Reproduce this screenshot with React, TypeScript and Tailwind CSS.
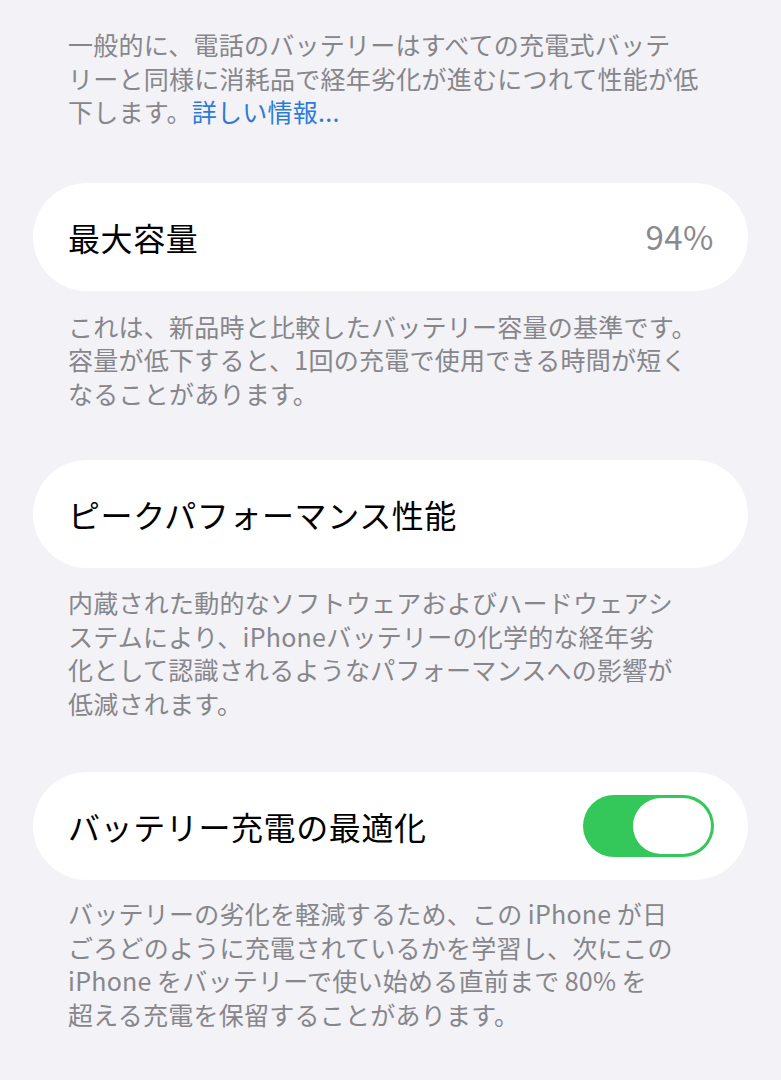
const font = { fontFamily: '"Noto Sans CJK JP", "Noto Sans", sans-serif' };

function Footer({ lines, className = "" }: { lines: React.ReactNode[]; className?: string }) {
  return (
    <p className={`px-[68px] text-[25px] leading-[33.5px] tracking-[0.25px] text-[#86868b] whitespace-nowrap ${className}`}>
      {lines.map((l, i) => (
        <span key={i} className="block">
          {l}
        </span>
      ))}
    </p>
  );
}

function Row({ title, right, className = "" }: { title: string; right?: React.ReactNode; className?: string }) {
  return (
    <div className={`mx-[33px] h-[108px] rounded-full bg-white pl-[35px] pr-[34px] flex items-center justify-between ${className}`}>
      <span className="text-[32px] tracking-[0.6px] text-black">{title}</span>
      {right}
    </div>
  );
}

function Toggle() {
  return (
    <div className="w-[131px] h-[62px] rounded-full bg-[#34c759] p-[3px] flex justify-end">
      <div className="w-[78px] h-[56px] rounded-full bg-white" />
    </div>
  );
}

export default function App() {
  return (
    <div className="min-h-[1080px] w-[781px] bg-[#f2f2f7] pt-[28px]" style={font}>
      <Footer
        lines={[
          "一般的に、電話のバッテリーはすべての充電式バッテ",
          "リーと同様に消耗品で経年劣化が進むにつれて性能が低",
          <>
            下します。<span className="text-[#2c7bd6]">詳しい情報...</span>
          </>,
        ]}
      />
      <Row
        className="mt-[54px]"
        title="最大容量"
        right={<span className="text-[33px] text-[#8a8a8e] tracking-[0.5px]">94%</span>}
      />
      <Footer
        className="mt-[19px]"
        lines={[
          "これは、新品時と比較したバッテリー容量の基準です。",
          "容量が低下すると、1回の充電で使用できる時間が短く",
          "なることがあります。",
        ]}
      />
      <Row className="mt-[50px]" title="ピークパフォーマンス性能" />
      <Footer
        className="mt-[18px]"
        lines={[
          "内蔵された動的なソフトウェアおよびハードウェアシ",
          "ステムにより、iPhoneバッテリーの化学的な経年劣",
          "化として認識されるようなパフォーマンスへの影響が",
          "低減されます。",
        ]}
      />
      <Row className="mt-[52px]" title="バッテリー充電の最適化" right={<Toggle />} />
      <Footer
        className="mt-[17px]"
        lines={[
          "バッテリーの劣化を軽減するため、この\u2009iPhone\u2009が日",
          "ごろどのように充電されているかを学習し、次にこの",
          "iPhone\u2009をバッテリーで使い始める直前まで\u200980%\u2009を",
          "超える充電を保留することがあります。",
        ]}
      />
    </div>
  );
}
